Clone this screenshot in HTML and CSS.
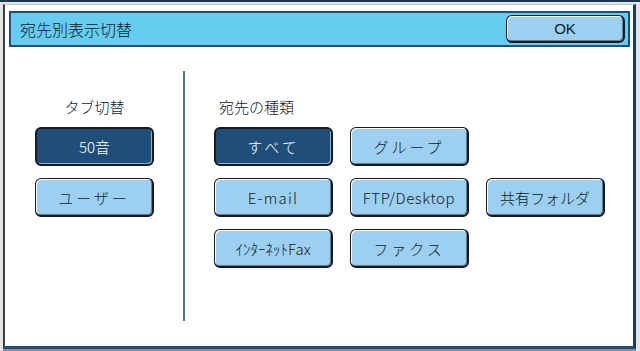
FILE: index.html
```html
<!DOCTYPE html>
<html lang="ja">
<head>
    <meta charset="UTF-8">
    <meta name="viewport" content="width=device-width, initial-scale=1.0">
    <title>宛先別表示切替</title>
    <link rel="stylesheet" href="styles.css">
</head>
<body>
    <div class="screen">
        <div class="dialog">
            <div class="title-bar">
                <span class="title">宛先別表示切替</span>
                <button type="button" class="btn btn-ok">OK</button>
            </div>
            <div class="content">
                <div class="tab-col">
                    <div class="label">タブ切替</div>
                    <button type="button" class="btn selected">50音</button>
                    <button type="button" class="btn spaced">ユーザー</button>
                </div>
                <div class="divider"></div>
                <div class="type-col">
                    <div class="label">宛先の種類</div>
                    <div class="type-grid">
                        <button type="button" class="btn selected spaced">すべて</button>
                        <button type="button" class="btn spaced">グループ</button>
                        <span></span>
                        <button type="button" class="btn latin wide">E-mail</button>
                        <button type="button" class="btn latin">FTP/Desktop</button>
                        <button type="button" class="btn">共有フォルダ</button>
                        <button type="button" class="btn narrow">ｲﾝﾀｰﾈｯﾄFax</button>
                        <button type="button" class="btn spaced">ファクス</button>
                    </div>
                </div>
            </div>
        </div>
    </div>
</body>
</html>
```

FILE: styles.css
```css
:root {
    --navy: #1f4e7a;
    --title-blue: #66ccf0;
    --btn-blue: #9dd0f0;
    --text-dark: #0e1a2a;
    --edge: #161c22;
}

* {
    box-sizing: border-box;
}

body {
    margin: 0;
    background-color: #ffffff;
    font-family: "Noto Sans CJK JP", "Liberation Sans", sans-serif;
    color: var(--text-dark);
}

.screen {
    width: 640px;
    height: 351px;
    border-top: 2px solid #1e3a50;
    background-color: #e4e4e4;
    padding: 2px 4px 0 3px;
    overflow: hidden;
}

.dialog {
    height: 345px;
    background-color: #ffffff;
    border-left: 2px solid #3a3f44;
    border-right: 3px solid #1d3c58;
    border-bottom: 3px solid var(--navy);
    border-top: 1px solid #c8c8c8;
    box-shadow: 0 2px 0 #8a9096;
    display: flex;
    flex-direction: column;
}

.title-bar {
    margin: 6px 3px 0 4px;
    height: 36px;
    background-color: var(--title-blue);
    border: 2px solid var(--navy);
    display: flex;
    align-items: center;
    justify-content: space-between;
    padding: 0 3px 0 9px;
}

.title {
    font-size: 16px;
    font-weight: 300;
    color: var(--text-dark);
}

.btn {
    font-family: "Noto Sans CJK JP", "Liberation Sans", sans-serif;
    font-size: 15px;
    font-weight: 300;
    color: var(--text-dark);
    background-color: var(--btn-blue);
    border: 1px solid var(--edge);
    border-right-width: 2px;
    border-bottom-width: 2px;
    border-radius: 6px;
    box-shadow: inset 1px 1px 0 #ffffff, inset -1px -1px 0 #6a7c8c;
    padding: 0;
    width: 119px;
    height: 39px;
    cursor: pointer;
}

.btn-ok {
    width: 119px;
    height: 28px;
    font-family: "Liberation Sans", sans-serif;
    font-size: 15px;
    font-weight: 400;
    background-color: #9ad0f0;
}

.btn.selected {
    background-color: var(--navy);
    color: #ffffff;
    border-width: 2px 2px 2px 2px;
    box-shadow: inset -1px -1px 0 #8fb0cc;
}

.btn.spaced {
    letter-spacing: 3px;
}

.btn.latin {
    font-size: 15px;
    letter-spacing: 0.6px;
}

.btn.latin.wide {
    letter-spacing: 1.2px;
}

.btn.narrow {
    font-size: 15px;
}

.content {
    flex: 1;
    display: flex;
    padding: 24px 0 25px 0;
}

.label {
    font-size: 15px;
    font-weight: 300;
    line-height: 20px;
    color: var(--text-dark);
}

.tab-col {
    width: 178px;
    display: flex;
    flex-direction: column;
    align-items: center;
    gap: 12px;
    padding: 26px 0 0 1px;
}

.tab-col .label {
    margin-bottom: -2px;
}

.divider {
    width: 2px;
    background-color: #4c7494;
}

.type-col {
    padding: 26px 0 0 29px;
}

.type-col .label {
    padding-left: 5px;
    margin-bottom: 10px;
}

.type-grid {
    display: grid;
    grid-template-columns: repeat(3, 119px);
    grid-auto-rows: 39px;
    column-gap: 17px;
    row-gap: 12px;
}
```
